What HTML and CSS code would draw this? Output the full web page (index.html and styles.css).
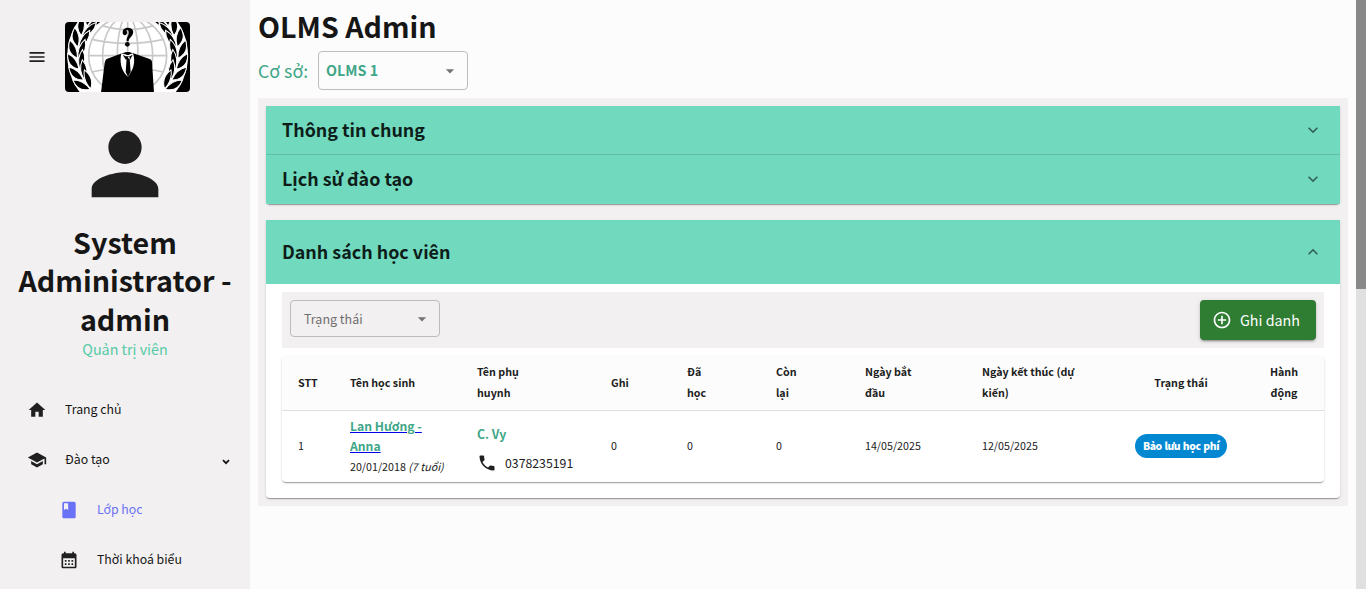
FILE: index.html
```html
<!DOCTYPE html>
<html lang="vi">
<head>
<meta charset="utf-8">
<title>OLMS Admin</title>
<link rel="stylesheet" href="styles.css">
</head>
<body>
<div class="app">
  <aside class="sidebar">
    <div class="brand">
      <svg class="icon" viewBox="0 0 24 24"><path d="M3 18h18v-2H3v2zm0-5h18v-2H3v2zm0-7v2h18V6H3z"/></svg>
      <svg class="emblem" viewBox="15 18 375 210">
        <defs>
          <path id="leaves" d="M52 121C30 110 22 92 31 66C47 80 54 98 52 121zM54 121C74 110 82 92 77 66C60 80 53 98 54 121z"/>
          <g id="laurel" fill="#000" stroke="#fff" stroke-width="3">
            <use href="#leaves" transform="rotate(50 203 119)"/>
            <use href="#leaves" transform="rotate(37 203 119)"/>
            <use href="#leaves" transform="rotate(24 203 119)"/>
            <use href="#leaves" transform="rotate(11 203 119)"/>
            <use href="#leaves" transform="rotate(-2 203 119)"/>
            <use href="#leaves" transform="rotate(-15 203 119)"/>
            <use href="#leaves" transform="rotate(-28 203 119)"/>
            <use href="#leaves" transform="rotate(-41 203 119)"/>
          </g>
        </defs>
        <rect x="15" y="18" width="375" height="210" fill="#000"/>
        <circle cx="203" cy="119" r="181" fill="#fff"/>
        <use href="#laurel"/>
        <use href="#laurel" transform="translate(406 0) scale(-1 1)"/>
        <circle cx="203" cy="119" r="121" fill="#fff"/>
        <g fill="none" stroke="#c8c8c8" stroke-width="5">
          <circle cx="203" cy="119" r="117"/>
          <ellipse cx="203" cy="119" rx="75" ry="118"/>
          <ellipse cx="203" cy="119" rx="31" ry="118"/>
          <path d="M85 119H321M203 0V238M95 70Q203 94 311 70M126 29Q203 53 280 29M95 168Q203 144 311 168"/>
        </g>
        <g fill="#000">
          <path d="M189 54C185 42 193 35 204 35C219 35 223 47 217 57C212 66 206 67 206 76H200C198 66 206 60 206 50C206 43 203 41 200 43C198 45 204 49 200 54C197 59 191 59 189 54z"/>
          <circle cx="202" cy="85" r="7"/>
          <path d="M188 111L140 129Q136 131 134 140L123 230H282L276 137Q275 131 269 129L220 112L204 108z"/>
        </g>
        <path d="M184 112C178 137 184 163 199 178L204 182C219 163 228 140 219 112L204 117z" fill="#fff"/>
        <path d="M192 112Q203 104 214 112L204 117zM198 121H208L209 127L212 168L204 182L197 168L200 127zM188 116L203 124L198 132zM218 116L203 124L210 132z" fill="#000"/>
      </svg>
    </div>
    <svg class="avatar" viewBox="0 0 24 24"><path d="M12 12c2.210 0 4-1.790 4-4s-1.790-4-4-4-4 1.790-4 4 1.790 4 4 4zm0 2c-2.670 0-8 1.340-8 4v2h16v-2c0-2.660-5.330-4-8-4z"/></svg>
    <h2 class="user-name">System Administrator - admin</h2>
    <div class="user-role">Quản trị viên</div>
    <nav class="nav">
      <a class="nav-item"><svg class="icon" viewBox="0 0 24 24"><path d="M10 20v-6h4v6h5v-8h3L12 3 2 12h3v8z"/></svg><span>Trang chủ</span></a>
      <a class="nav-item"><svg class="icon" viewBox="0 0 24 24"><path d="M5 13.180v4L12 21l7-3.820v-4L12 17l-7-3.820zM12 3L1 9l11 6 9-4.910V17h2V9L12 3z"/></svg><span>Đào tạo</span><svg class="caret" viewBox="0 0 8 6"><path d="M1 1.200L4 4.200L7 1.200" fill="none" stroke="#161616" stroke-width="1.800"/></svg></a>
      <a class="nav-item sub active"><svg class="icon" viewBox="0 0 24 24"><path d="M18 2H6c-1.100 0-2 .9-2 2v16c0 1.100.9 2 2 2h12c1.100 0 2-.9 2-2V4c0-1.100-.9-2-2-2zM6 4h5v8l-2.500-1.500L6 12V4z"/></svg><span>Lớp học</span></a>
      <a class="nav-item sub"><svg class="icon" viewBox="0 0 24 24"><path d="M19 4h-1V2h-2v2H8V2H6v2H5c-1.110 0-1.990.9-1.990 2L3 20c0 1.100.89 2 2 2h14c1.100 0 2-.9 2-2V6c0-1.100-.9-2-2-2zm0 16H5V10h14v10zM9 14H7v-2h2v2zm4 0h-2v-2h2v2zm4 0h-2v-2h2v2zm-8 4H7v-2h2v2zm4 0h-2v-2h2v2zm4 0h-2v-2h2v2z"/></svg><span>Thời khoá biểu</span></a>
    </nav>
  </aside>

  <main class="main">
    <h1 class="title">OLMS Admin</h1>
    <div class="branch">
      <span class="branch-label">Cơ sở:</span>
      <div class="select branch-select"><span>OLMS 1</span><svg class="arrow" viewBox="0 0 24 24"><path d="M7 10l5 5 5-5z"/></svg></div>
    </div>

    <div class="panel">
      <section class="accordion-group">
        <div class="summary"><h3>Thông tin chung</h3><svg class="chevron" viewBox="0 0 24 24"><path d="M16.590 8.590L12 13.170 7.410 8.590 6 10l6 6 6-6z"/></svg></div>
        <div class="summary"><h3>Lịch sử đào tạo</h3><svg class="chevron" viewBox="0 0 24 24"><path d="M16.590 8.590L12 13.170 7.410 8.590 6 10l6 6 6-6z"/></svg></div>
      </section>

      <section class="accordion-group students">
        <div class="summary open"><h3>Danh sách học viên</h3><svg class="chevron up" viewBox="0 0 24 24"><path d="M16.590 8.590L12 13.170 7.410 8.590 6 10l6 6 6-6z"/></svg></div>
        <div class="details">
          <div class="toolbar">
            <div class="select status-select"><span>Trạng thái</span><svg class="arrow" viewBox="0 0 24 24"><path d="M7 10l5 5 5-5z"/></svg></div>
            <button class="enroll"><svg viewBox="0 0 24 24"><path d="M13 7h-2v4H7v2h4v4h2v-4h4v-2h-4V7zm-1-5C6.480 2 2 6.480 2 12s4.480 10 10 10 10-4.480 10-10S17.520 2 12 2zm0 18c-4.410 0-8-3.590-8-8s3.590-8 8-8 8 3.590 8 8-3.590 8-8 8z"/></svg><span>Ghi danh</span></button>
          </div>
          <div class="table-card">
            <table>
              <colgroup><col class="c-no"><col class="c-name"><col class="c-parent"><col class="c-reg"><col class="c-done"><col class="c-left"><col class="c-start"><col class="c-end"><col class="c-status"><col class="c-action"></colgroup>
              <thead><tr><th>STT</th><th>Tên học sinh</th><th>Tên phụ<br>huynh</th><th>Ghi</th><th>Đã<br>học</th><th>Còn<br>lại</th><th>Ngày bắt<br>đầu</th><th>Ngày kết thúc (dự<br>kiến)</th><th class="center">Trạng thái</th><th class="center">Hành<br>động</th></tr></thead>
              <tbody><tr>
                <td>1</td>
                <td class="rich"><a class="student" href="#"><span>Lan Hương -<br>Anna</span></a><div class="birth">20/01/2018 <i>(7 tuổi)</i></div></td>
                <td class="contact"><div class="parent">C. Vy</div><div class="phone"><svg viewBox="0 0 24 24"><path d="M6.620 10.790c1.440 2.830 3.760 5.140 6.590 6.590l2.200-2.200c.27-.27.670-.36 1.020-.24 1.120.37 2.330.57 3.570.57.55 0 1 .45 1 1V20c0 .55-.45 1-1 1-9.390 0-17-7.610-17-17 0-.55.45-1 1-1h3.500c.55 0 1 .45 1 1 0 1.250.2 2.450.57 3.570.110.35.030.74-.25 1.020l-2.200 2.200z"/></svg><span>0378235191</span></div></td>
                <td>0</td><td>0</td><td>0</td><td>14/05/2025</td><td>12/05/2025</td>
                <td class="center status"><span class="chip">Bảo lưu học phí</span></td><td></td>
              </tr></tbody>
            </table>
          </div>
        </div>
      </section>
    </div>
  </main>
  <div class="scrollbar"><div class="thumb"></div></div>
</div>
</body>
</html>
```
FILE: styles.css
```css
* { box-sizing: border-box; }
body {
  margin: 0;
  height: 589px;
  overflow: hidden;
  background: #fcfcfc;
  color: #161616;
  font-family: "Noto Sans CJK SC", "Noto Sans", sans-serif;
}
h1, h2, h3 { margin: 0; font-weight: 700; }
svg { flex: none; fill: #202020; }
.app { display: flex; height: 589px; }

.sidebar {
  width: 250px;
  flex: none;
  overflow: hidden;
  background: #f2f0f1;
  display: flex;
  flex-direction: column;
  align-items: center;
}
.brand { display: flex; align-items: center; align-self: stretch; gap: 18px; padding: 22px 0 0 27px; }
.icon { width: 20px; height: 20px; }
.emblem { width: 125px; height: 70px; border-radius: 4px; }
.avatar { width: 100px; height: 100px; margin-top: 22px; }
.user-name { width: 240px; margin-top: 9px; text-align: center; font-size: 28.7px; line-height: 38.4px; }
.user-role { margin-top: 1px; font-size: 14.3px; line-height: 20px; color: #55cba6; }
.nav { align-self: stretch; margin-top: 25px; }
.nav-item { display: flex; align-items: center; height: 50px; padding: 0 20px 0 27px; gap: 18px; font-size: 12.3px; }
.nav-item .icon { margin-top: 1px; }
.nav-item.sub { padding-left: 59px; }
.nav-item.active { color: #6a71f7; }
.nav-item.active svg { fill: #6a71f7; }
.caret { width: 8px; height: 6px; margin: 5px 0 0 auto; }

.main { flex: 1; padding: 7px 8px 0; }
.title { font-size: 28.6px; line-height: 38px; }
.branch { display: flex; align-items: center; gap: 10px; margin: 6px 0 8px; }
.branch-label { width: 50px; margin-top: -2px; font-size: 17.8px; color: #40a688; white-space: nowrap; }
.select { display: flex; align-items: center; justify-content: space-between; width: 150px; border: 1px solid #bdbcbc; border-radius: 4px; }
.select span { margin-top: -1px; }
.arrow { width: 20px; height: 20px; fill: #757575; }
.branch-select { height: 39px; padding: 0 7px; font-size: 14.3px; font-weight: 700; color: #40a688; }
.branch-select span { margin-top: -2px; }
.status-select { height: 37px; padding: 0 7px 0 13px; font-size: 12.5px; color: #6f6e6f; }

.panel { background: #f2f0f1; padding: 8px; height: 408px; }
.accordion-group { background: #fff; border-radius: 0 0 4px 4px; box-shadow: 0 2px 1px -1px rgba(0,0,0,.2), 0 1px 1px rgba(0,0,0,.14), 0 1px 3px rgba(0,0,0,.12); }
.summary { display: flex; align-items: center; justify-content: space-between; height: 48px; padding: 0 16px; background: #71d9be; }
.summary + .summary { border-top: 1px solid #63bea7; height: 50px; padding-bottom: 1px; }
.summary.open { height: 64px; }
.summary h3 { margin-top: -3px; font-size: 17.9px; color: #0d1d19; }
.summary + .summary h3 { margin-top: -2px; }
.chevron { width: 20px; height: 20px; margin-right: 1px; fill: #326256; }
.up { transform: rotate(180deg); }
.students { margin-top: 16px; }
.details { padding: 8px 16px 16px; }
.toolbar { display: flex; align-items: flex-start; justify-content: space-between; height: 56px; padding: 8px; background: #f2f0f1; }
.enroll { display: flex; align-items: center; gap: 8px; width: 116px; height: 40px; padding: 0 0 0 12px; border: 0; border-radius: 4px; background: #2e7d32; color: #fff; font: 400 14.3px "Noto Sans CJK SC", "Noto Sans", sans-serif; box-shadow: 0 3px 1px -2px rgba(0,0,0,.2), 0 2px 2px rgba(0,0,0,.14), 0 1px 5px rgba(0,0,0,.12); }
.enroll span { margin-top: -2px; }
.enroll svg { width: 20px; height: 20px; fill: #fff; }

.table-card { margin-top: 8px; height: 126px; border-radius: 4px; overflow: hidden; box-shadow: 0 2px 1px -1px rgba(0,0,0,.2), 0 1px 1px rgba(0,0,0,.14), 0 1px 3px rgba(0,0,0,.12); }
table { width: 100%; table-layout: fixed; border-collapse: collapse; color: #202020; }
.c-no { width: 52px; } .c-name { width: 127px; } .c-parent { width: 134px; }
.c-reg { width: 76px; } .c-done, .c-left { width: 89px; } .c-start { width: 117px; }
.c-end { width: 152px; } .c-status { width: 125px; } .c-action { width: 81px; }
th, td { padding: 0 0 1px 16px; text-align: left; vertical-align: middle; white-space: nowrap; }
th { height: 54px; background: #fcfcfc; font-size: 10.7px; line-height: 21px; }
thead tr { border-bottom: 1px solid #e0e0e0; }
td { height: 72px; padding-bottom: 2px; font-size: 10.7px; }
th.center, td.center { padding-left: 1px; text-align: center; }
td.rich, td.status { padding-bottom: 0; }
td.contact { padding: 5px 0 0 16px; }
.student { display: block; color: #0000ee; font-size: 12.2px; font-weight: 700; line-height: 20px; }
.student span { color: #40a688; }
.birth { line-height: 21px; }
.parent { color: #40a688; font-size: 12.3px; font-weight: 700; line-height: 20px; }
.phone { display: flex; align-items: center; gap: 8px; height: 20px; margin-top: 9px; font-size: 12.3px; }
.phone svg { width: 20px; height: 20px; }
.chip { display: inline-block; height: 24px; padding: 0 8px; border-radius: 12px; background: #0288d1; color: #fff; font-size: 10.4px; font-weight: 900; letter-spacing: -.4px; word-spacing: .6px; line-height: 23px; }

.scrollbar { width: 10px; flex: none; background: #e0e0e0; }
.thumb { height: 289px; background: #888; }
```
